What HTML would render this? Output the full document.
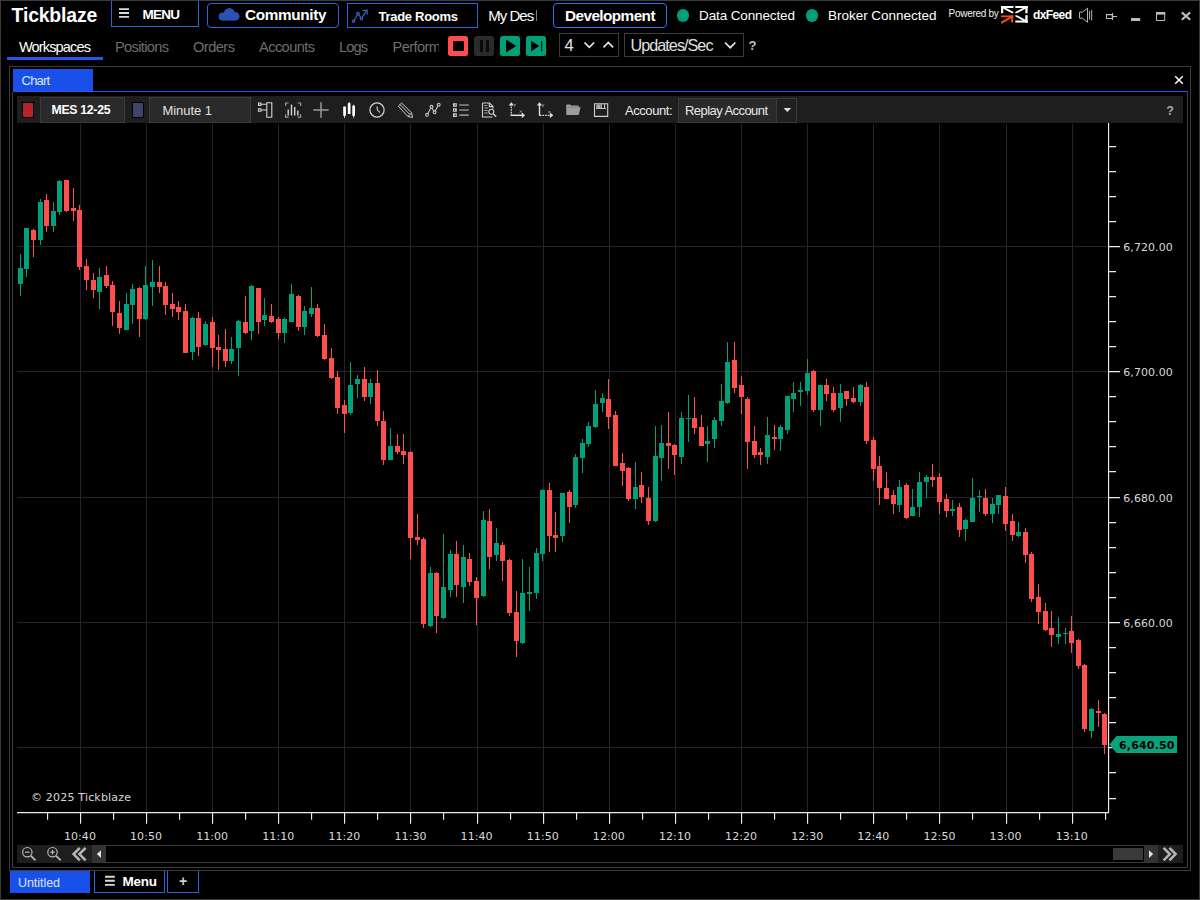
<!DOCTYPE html>
<html lang="en"><head><meta charset="utf-8"><title>Tickblaze</title>
<style>
html,body{margin:0;padding:0;background:#000;}
body{width:1200px;height:900px;overflow:hidden;position:relative;}
#win{position:absolute;left:0;top:0;width:1200px;height:900px;background:#000;overflow:hidden;}
#win>div,#win>svg{position:absolute;}
.b{box-sizing:border-box;}
.tx{white-space:pre;overflow:visible;}
.clipP{width:46px;overflow:hidden;}

</style></head>
<body>
<div id="win">
<!-- window border -->
<div class="b" style="left:0;top:0;width:1200px;height:900px;border:1px solid #3c3c3c;"></div>
<!-- title bar buttons -->
<div class="b" style="left:111px;top:1px;width:88px;height:26px;border:1px solid #2f63d8;border-top:none;"></div>
<svg style="left:118px;top:8px" width="13" height="12" viewBox="0 0 13 12"><path d="M1 1.1h10M1 5h10M1 8.9h10" stroke="#d8d8d8" stroke-width="1.9" fill="none"/></svg>
<div class="b" style="left:207px;top:3px;width:132px;height:25px;border:1px solid #2f63d8;border-radius:4px;"></div>
<svg style="left:216px;top:6px" width="26" height="17" viewBox="216 6 26 17"><g fill="#2c50b4"><circle cx="229.3" cy="13.4" r="5.5"/><circle cx="222.6" cy="16.6" r="4"/><circle cx="235.2" cy="16.3" r="4.3"/><rect x="222.6" y="15" width="12.6" height="5.6"/></g></svg>
<div class="b" style="left:347px;top:3px;width:130.5px;height:25px;border:1px solid #2f63d8;"></div>
<svg style="left:350px;top:6px" width="20" height="19" viewBox="350 6 20 19" fill="none" stroke="#3b61c8" stroke-width="1.2"><path d="M353.6 21.2l4.4-7.6 3.5 5 5-8"/><path d="M362.4 10.6l4.6-.6.3 4.6"/><g fill="#000"><circle cx="353.5" cy="21.3" r="1.2"/><circle cx="358" cy="13.6" r="1.2"/><circle cx="361.5" cy="18.6" r="1.2"/></g></svg>
<div class="b" style="left:553px;top:3px;width:114px;height:25px;border:1px solid #3a6cf0;border-radius:4px;"></div>
<div style="left:677px;top:9.4px;width:12.2px;height:12.2px;border-radius:50%;background:#00a078;"></div>
<div style="left:805.8px;top:9.4px;width:12.2px;height:12.2px;border-radius:50%;background:#00a078;"></div>
<div style="left:535.7px;top:9.8px;width:0.8px;height:10.8px;background:#808080;"></div>
<!-- dxFeed logo -->
<!-- window icons -->
<!-- tabs row -->
<div style="left:7px;top:57px;width:96px;height:2.5px;background:#2458f0;"></div>
<div style="left:448px;top:36px;width:20px;height:20.2px;border-radius:2.5px;background:#ff4d4f;"></div>
<div style="left:453px;top:41px;width:10.5px;height:10.2px;background:#000;"></div>
<div style="left:474px;top:36px;width:20px;height:20.2px;border-radius:2.5px;background:#2b2b2b;"></div>
<div style="left:480px;top:39.5px;width:3px;height:12.5px;background:#0a0a0a;"></div>
<div style="left:485.5px;top:39.5px;width:3px;height:12.5px;background:#0a0a0a;"></div>
<div style="left:500px;top:36px;width:20px;height:20.2px;border-radius:2.5px;background:#00a078;"></div>
<svg style="left:500px;top:36px" width="20" height="20" viewBox="0 0 20 20"><path d="M6 3.5v13l10.2-6.5z" fill="#000"/></svg>
<div style="left:526px;top:36px;width:20px;height:20.2px;border-radius:2.5px;background:#00a078;"></div>
<svg style="left:526px;top:36px" width="20" height="20" viewBox="0 0 20 20"><path d="M5 4.8v10.6l8.3-5.3z" fill="#000"/><path d="M15.6 5v10.2" stroke="#000" stroke-width="1.1"/></svg>
<div class="b" style="left:559px;top:33px;width:60px;height:24px;border:1px solid #3c3c3c;"></div>
<svg style="left:580px;top:38px" width="38" height="14" viewBox="0 0 38 14"><path d="M4.5 4.5l4.8 4.8 4.8-4.8M23.5 9.3l4.8-4.8 4.8 4.8" stroke="#e6e6e6" stroke-width="1.7" fill="none"/></svg>
<div class="b" style="left:624px;top:33px;width:120px;height:24px;border:1px solid #3c3c3c;"></div>
<svg style="left:720px;top:38px" width="20" height="14" viewBox="0 0 20 14"><path d="M5 4.5l5.2 5.2 5.2-5.2" stroke="#e6e6e6" stroke-width="1.7" fill="none"/></svg>
<!-- panel -->
<div class="b" style="left:9px;top:66px;width:1182px;height:805px;border:1px solid #3c3c3c;"></div>
<div class="b" style="left:12px;top:92px;width:1176px;height:776px;border:1px solid #3c3c3c;border-top:none;"></div>
<div style="left:13px;top:69px;width:80px;height:23px;background:#1a50ea;"></div>
<div style="left:13px;top:91px;width:1175px;height:1.4px;background:#2458f0;"></div>
<svg style="left:1174px;top:75px" width="10" height="10" viewBox="0 0 10 10"><path d="M1.2 1.2l7.6 7.6M8.8 1.2L1.2 8.8" stroke="#fff" stroke-width="1.5"/></svg>
<!-- toolbar -->
<div style="left:17px;top:96px;width:1166px;height:27px;background:#1e1e1e;"></div>
<div class="b" style="left:22px;top:101.6px;width:12px;height:16px;border:1px solid #000;background:#b8232a;"></div>
<div class="b" style="left:40px;top:97px;width:85px;height:25.5px;border:1px solid #3a3a3a;background:#2a2a2a;"></div>
<div class="b" style="left:132px;top:101.6px;width:11.8px;height:16px;border:1px solid #000;background:#3e4568;"></div>
<div class="b" style="left:149px;top:97px;width:102px;height:25.5px;border:1px solid #3a3a3a;background:#2a2a2a;"></div>
<div class="b" style="left:678px;top:97.5px;width:119px;height:25px;border:1px solid #3a3a3a;background:#2a2a2a;"></div>
<div style="left:777px;top:98.5px;width:19px;height:23px;background:#202020;"></div>
<div style="left:776px;top:98.5px;width:1px;height:23px;background:#3a3a3a;"></div>
<svg style="left:782px;top:106px" width="11" height="8" viewBox="0 0 11 8"><path d="M1.6 2h7.6L5.4 6z" fill="#e0e0e0"/></svg>
<!-- scrollbar row -->
<div style="left:17px;top:845px;width:75px;height:18px;background:#1e1e1e;"></div>
<div style="left:92px;top:845px;width:14px;height:18px;background:#333;"></div>
<div class="b" style="left:106px;top:845px;width:1038px;height:18px;border-top:1px solid #3a3a3a;border-bottom:1px solid #3a3a3a;"></div>
<div style="left:1113px;top:848px;width:30px;height:12px;background:#3a3a3a;"></div>
<div style="left:1144px;top:845px;width:14px;height:18px;background:#333;"></div>
<div style="left:1158px;top:845px;width:25px;height:18px;background:#1e1e1e;"></div>
<!-- bottom tabs -->
<div style="left:10px;top:871px;width:80px;height:22px;background:#1a50ea;"></div>
<div class="b" style="left:94px;top:871px;width:71px;height:22px;border:1px solid #2f63d8;border-top:none;"></div>
<svg style="left:104px;top:875px" width="12" height="13" viewBox="0 0 12 13"><path d="M1 1.7h9.8M1 5.8h9.8M1 9.9h9.8" stroke="#d8d8d8" stroke-width="1.9" fill="none"/></svg>
<div class="b" style="left:167px;top:871px;width:32px;height:22px;border:1px solid #2f63d8;border-top:none;"></div>

<svg style="left:0;top:0" width="1200" height="900" viewBox="0 0 1200 900" shape-rendering="crispEdges">
<path d="M80.5 124V812M146.5 124V812M212.5 124V812M278.5 124V812M344.5 124V812M410.5 124V812M477.5 124V812M543.5 124V812M609.5 124V812M675.5 124V812M741.5 124V812M807.5 124V812M873.5 124V812M939.5 124V812M1006.5 124V812M1072.5 124V812M17 246.5H1108M17 371.5H1108M17 497.5H1108M17 622.5H1108M17 747.5H1108" stroke="#24242d" stroke-width="1" fill="none"/>
<path d="M20 254h1V296h-1zM18 268h5V284h-5zM26 228h1V277h-1zM24 228h5V269h-5zM40 199h1V245h-1zM38 202h5V240h-5zM53 202h1V232h-1zM51 211h5V226h-5zM59 180h1V215h-1zM57 181h5V212h-5zM99 268h1V309h-1zM97 277h5V292h-5zM126 293h1V330h-1zM124 304h5V330h-5zM132 284h1V324h-1zM130 289h5V305h-5zM145 266h1V320h-1zM143 285h5V319h-5zM152 260h1V306h-1zM150 282h5V287h-5zM192 317h1V360h-1zM190 318h5V352h-5zM205 321h1V346h-1zM203 324h5V345h-5zM231 337h1V364h-1zM229 349h5V361h-5zM238 320h1V376h-1zM236 321h5V348h-5zM251 285h1V340h-1zM249 286h5V331h-5zM264 298h1V326h-1zM262 315h5V320h-5zM284 318h1V343h-1zM282 319h5V333h-5zM291 284h1V322h-1zM289 294h5V322h-5zM304 306h1V335h-1zM302 311h5V327h-5zM311 287h1V317h-1zM309 308h5V314h-5zM350 362h1V415h-1zM348 385h5V413h-5zM357 375h1V398h-1zM355 379h5V384h-5zM370 379h1V404h-1zM368 383h5V397h-5zM390 428h1V460h-1zM388 446h5V460h-5zM430 567h1V627h-1zM428 573h5V626h-5zM443 534h1V619h-1zM441 587h5V618h-5zM450 550h1V597h-1zM448 554h5V590h-5zM463 545h1V603h-1zM461 557h5V587h-5zM483 511h1V597h-1zM481 520h5V596h-5zM496 528h1V561h-1zM494 543h5V555h-5zM522 559h1V644h-1zM520 593h5V643h-5zM529 567h1V611h-1zM527 592h5V594h-5zM536 548h1V599h-1zM534 553h5V593h-5zM542 489h1V561h-1zM540 490h5V554h-5zM562 493h1V542h-1zM560 493h5V536h-5zM575 454h1V508h-1zM573 457h5V505h-5zM582 439h1V473h-1zM580 443h5V458h-5zM588 422h1V447h-1zM586 426h5V444h-5zM595 390h1V428h-1zM593 404h5V427h-5zM602 393h1V412h-1zM600 398h5V403h-5zM635 462h1V509h-1zM633 487h5V499h-5zM655 426h1V522h-1zM653 456h5V521h-5zM661 425h1V481h-1zM659 443h5V458h-5zM681 412h1V464h-1zM679 418h5V457h-5zM688 395h1V442h-1zM686 418h5V419h-5zM707 426h1V462h-1zM705 441h5V444h-5zM714 417h1V448h-1zM712 420h5V439h-5zM721 384h1V426h-1zM719 401h5V421h-5zM727 342h1V404h-1zM725 362h5V403h-5zM767 417h1V464h-1zM765 435h5V457h-5zM780 425h1V451h-1zM778 427h5V439h-5zM787 396h1V434h-1zM785 396h5V430h-5zM793 382h1V412h-1zM791 393h5V399h-5zM800 382h1V406h-1zM798 390h5V392h-5zM807 359h1V395h-1zM805 373h5V391h-5zM820 385h1V426h-1zM818 385h5V410h-5zM840 384h1V422h-1zM838 393h5V408h-5zM860 384h1V406h-1zM858 385h5V402h-5zM899 480h1V512h-1zM897 487h5V505h-5zM912 489h1V516h-1zM910 507h5V516h-5zM919 472h1V517h-1zM917 482h5V507h-5zM926 475h1V498h-1zM924 477h5V482h-5zM952 500h1V516h-1zM950 509h5V511h-5zM965 519h1V541h-1zM963 520h5V529h-5zM972 478h1V522h-1zM970 498h5V522h-5zM979 490h1V512h-1zM977 496h5V497h-5zM992 498h1V523h-1zM990 504h5V514h-5zM998 495h1V514h-1zM996 495h5V505h-5zM1018 522h1V537h-1zM1016 532h5V536h-5zM1058 617h1V644h-1zM1056 634h5V637h-5zM1065 628h1V644h-1zM1063 633h5V634h-5zM1091 708h1V738h-1zM1089 709h5V731h-5z" fill="#00a07a"/>
<path d="M33 229h1V257h-1zM31 230h5V240h-5zM46 194h1V232h-1zM44 200h5V226h-5zM66 180h1V212h-1zM64 180h5V211h-5zM73 188h1V221h-1zM71 208h5V211h-5zM79 205h1V270h-1zM77 210h5V267h-5zM86 259h1V290h-1zM84 266h5V280h-5zM93 273h1V298h-1zM91 280h5V290h-5zM106 266h1V288h-1zM104 275h5V286h-5zM112 281h1V326h-1zM110 285h5V312h-5zM119 301h1V334h-1zM117 313h5V328h-5zM139 287h1V337h-1zM137 288h5V319h-5zM159 266h1V293h-1zM157 282h5V287h-5zM165 282h1V315h-1zM163 286h5V305h-5zM172 293h1V317h-1zM170 304h5V309h-5zM178 301h1V320h-1zM176 307h5V312h-5zM185 304h1V353h-1zM183 311h5V353h-5zM198 312h1V356h-1zM196 318h5V347h-5zM212 317h1V367h-1zM210 322h5V348h-5zM218 335h1V370h-1zM216 347h5V350h-5zM225 329h1V367h-1zM223 349h5V361h-5zM245 296h1V334h-1zM243 322h5V333h-5zM258 288h1V334h-1zM256 288h5V322h-5zM271 304h1V323h-1zM269 316h5V322h-5zM278 317h1V339h-1zM276 319h5V333h-5zM298 295h1V331h-1zM296 296h5V327h-5zM317 304h1V337h-1zM315 308h5V336h-5zM324 324h1V360h-1zM322 335h5V359h-5zM331 348h1V379h-1zM329 358h5V378h-5zM337 371h1V414h-1zM335 377h5V408h-5zM344 400h1V433h-1zM342 405h5V414h-5zM364 367h1V401h-1zM362 379h5V397h-5zM377 370h1V426h-1zM375 383h5V421h-5zM383 411h1V465h-1zM381 421h5V460h-5zM397 434h1V454h-1zM395 446h5V452h-5zM403 434h1V464h-1zM401 451h5V455h-5zM410 451h1V559h-1zM408 452h5V538h-5zM417 514h1V545h-1zM415 537h5V540h-5zM423 537h1V628h-1zM421 539h5V624h-5zM436 572h1V633h-1zM434 573h5V616h-5zM456 541h1V597h-1zM454 554h5V585h-5zM469 553h1V586h-1zM467 559h5V582h-5zM476 577h1V625h-1zM474 581h5V598h-5zM489 509h1V569h-1zM487 521h5V557h-5zM502 542h1V581h-1zM500 545h5V561h-5zM509 559h1V616h-1zM507 560h5V613h-5zM516 591h1V657h-1zM514 612h5V641h-5zM549 483h1V552h-1zM547 490h5V536h-5zM555 512h1V552h-1zM553 535h5V538h-5zM569 490h1V523h-1zM567 492h5V507h-5zM608 379h1V429h-1zM606 399h5V417h-5zM615 411h1V466h-1zM613 415h5V466h-5zM622 453h1V486h-1zM620 463h5V471h-5zM628 467h1V501h-1zM626 468h5V499h-5zM641 472h1V503h-1zM639 485h5V497h-5zM648 487h1V525h-1zM646 498h5V521h-5zM668 412h1V469h-1zM666 443h5V446h-5zM674 444h1V475h-1zM672 445h5V455h-5zM694 397h1V434h-1zM692 418h5V428h-5zM701 415h1V446h-1zM699 427h5V446h-5zM734 342h1V393h-1zM732 360h5V388h-5zM741 376h1V414h-1zM739 385h5V397h-5zM747 397h1V469h-1zM745 399h5V442h-5zM754 426h1V458h-1zM752 441h5V455h-5zM760 448h1V465h-1zM758 452h5V455h-5zM774 425h1V450h-1zM772 437h5V439h-5zM813 370h1V412h-1zM811 371h5V410h-5zM826 379h1V401h-1zM824 385h5V394h-5zM833 387h1V412h-1zM831 393h5V410h-5zM846 391h1V406h-1zM844 391h5V399h-5zM853 387h1V403h-1zM851 398h5V402h-5zM866 382h1V444h-1zM864 387h5V441h-5zM873 437h1V481h-1zM871 440h5V469h-5zM879 456h1V505h-1zM877 466h5V488h-5zM886 472h1V499h-1zM884 488h5V499h-5zM893 490h1V514h-1zM891 495h5V504h-5zM906 483h1V519h-1zM904 485h5V518h-5zM932 464h1V487h-1zM930 477h5V480h-5zM939 473h1V514h-1zM937 477h5V502h-5zM946 494h1V517h-1zM944 499h5V511h-5zM959 503h1V537h-1zM957 507h5V530h-5zM985 489h1V516h-1zM983 498h5V514h-5zM1005 487h1V531h-1zM1003 496h5V524h-5zM1012 514h1V541h-1zM1010 521h5V535h-5zM1025 528h1V563h-1zM1023 532h5V555h-5zM1031 552h1V602h-1zM1029 554h5V599h-5zM1038 584h1V624h-1zM1036 597h5V612h-5zM1045 603h1V631h-1zM1043 611h5V630h-5zM1051 611h1V647h-1zM1049 628h5V635h-5zM1071 616h1V653h-1zM1069 631h5V643h-5zM1078 639h1V669h-1zM1076 640h5V666h-5zM1084 664h1V732h-1zM1082 665h5V729h-5zM1098 700h1V727h-1zM1096 711h5V713h-5zM1104 713h1V754h-1zM1102 714h5V745h-5z" fill="#ff4e4e"/>
<path d="M1108 123h1.15V813.15h-1.15zM17 812H1109v1.15H17z" fill="#ececec" shape-rendering="auto"/>
<path d="M1109 146H1116v1.15H1109zM1109 171H1116v1.15H1109zM1109 196H1116v1.15H1109zM1109 221H1116v1.15H1109zM1109 246H1120v1.15H1109zM1109 271H1116v1.15H1109zM1109 296H1116v1.15H1109zM1109 321H1116v1.15H1109zM1109 346H1116v1.15H1109zM1109 371H1120v1.15H1109zM1109 396H1116v1.15H1109zM1109 421H1116v1.15H1109zM1109 446H1116v1.15H1109zM1109 471H1116v1.15H1109zM1109 497H1120v1.15H1109zM1109 522H1116v1.15H1109zM1109 547H1116v1.15H1109zM1109 572H1116v1.15H1109zM1109 597H1116v1.15H1109zM1109 622H1120v1.15H1109zM1109 647H1116v1.15H1109zM1109 672H1116v1.15H1109zM1109 697H1116v1.15H1109zM1109 722H1116v1.15H1109zM1109 747H1120v1.15H1109zM1109 772H1116v1.15H1109zM1109 798H1116v1.15H1109zM80 813v10.8h1.15V813zM146 813v10.8h1.15V813zM212 813v10.8h1.15V813zM278 813v10.8h1.15V813zM344 813v10.8h1.15V813zM410 813v10.8h1.15V813zM477 813v10.8h1.15V813zM543 813v10.8h1.15V813zM609 813v10.8h1.15V813zM675 813v10.8h1.15V813zM741 813v10.8h1.15V813zM807 813v10.8h1.15V813zM873 813v10.8h1.15V813zM939 813v10.8h1.15V813zM1006 813v10.8h1.15V813zM1072 813v10.8h1.15V813zM47 813v6.8h1.15V813zM113 813v6.8h1.15V813zM179 813v6.8h1.15V813zM245 813v6.8h1.15V813zM311 813v6.8h1.15V813zM377 813v6.8h1.15V813zM443 813v6.8h1.15V813zM510 813v6.8h1.15V813zM576 813v6.8h1.15V813zM642 813v6.8h1.15V813zM708 813v6.8h1.15V813zM774 813v6.8h1.15V813zM840 813v6.8h1.15V813zM906 813v6.8h1.15V813zM972 813v6.8h1.15V813zM1039 813v6.8h1.15V813zM1105 813v6.8h1.15V813z" fill="#ececec" shape-rendering="auto"/>
<path d="M1109.5 744.5L1116.5 736H1177V753H1116.5z" fill="#0aa27c" shape-rendering="auto"/>
</svg>
<svg style="left:0;top:0" width="1200" height="900" viewBox="0 0 1200 900" fill="none">
<!-- dxFeed logo -->
<defs>
<clipPath id="q1"><rect x="1001" y="5.9" width="12.4" height="7.4"/></clipPath>
<clipPath id="q2"><rect x="1015.3" y="5.9" width="12.5" height="7.4"/></clipPath>
<clipPath id="q3"><path d="M1001 15.2h12.4v7.5h-2.2v1h-10.2z"/></clipPath>
<clipPath id="q4"><rect x="1015.3" y="15.2" width="12.5" height="7.5"/></clipPath>
</defs>
<g stroke="#fff" clip-path="url(#q1)"><path d="M1001 6.95H1014" stroke-width="2.1"/><path d="M1002.1 5.9V14" stroke-width="2.2"/><path d="M1002 6.9L1014.4 13.6" stroke-width="1.9"/></g>
<g stroke="#fff" clip-path="url(#q2)"><path d="M1015 6.95H1028" stroke-width="2.1"/><path d="M1026.55 5.9V14" stroke-width="2.5"/><path d="M1026.8 6.9L1014.4 13.6" stroke-width="1.9"/></g>
<g stroke="#fff" clip-path="url(#q4)"><path d="M1015 21.65H1028" stroke-width="2.1"/><path d="M1026.55 15V23" stroke-width="2.5"/><path d="M1014.4 14.9L1026.8 21.7" stroke-width="1.9"/></g>
<g stroke="#f04a20" clip-path="url(#q3)"><path d="M1001 16.25H1014" stroke-width="2.1"/><path d="M1012.3 15V22.7" stroke-width="2.2"/><path d="M1000 23.6L1012.4 16.3" stroke-width="2"/></g>
<!-- speaker -->
<path d="M1079.5 12.2h2.8l5.2-4v14l-5.2-4h-2.8z" stroke="#b4b4b4" stroke-width="1"/>
<path d="M1089.6 11v8.6M1091.7 10v10.6" stroke="#b4b4b4" stroke-width="1"/>
<!-- pin -->
<path d="M1106.5 14.6h5.8v3.9h-5.8z" stroke="#bdbdbd" stroke-width="1.1"/>
<path d="M1112.6 13v7M1112.6 16.5h4.4" stroke="#bdbdbd" stroke-width="1.1"/>
<!-- minimize -->
<path d="M1131 18h9.2v3h-9.2z" fill="#bdbdbd"/>
<!-- maximize -->
<path d="M1156.5 12.5h8.2v8h-8.2z" stroke="#bdbdbd" stroke-width="1"/>
<path d="M1156 12h9.2v2.6h-9.2z" fill="#bdbdbd"/>
<!-- close -->
<path d="M1181.8 12.4l8.4 7.4M1190.2 12.4l-8.4 7.4" stroke="#bdbdbd" stroke-width="2.1"/>
<!-- toolbar icons -->
<g stroke="#d6d6d6" stroke-width="1.1">
<path d="M266.8 102.8h5v14.5h-5z"/>
<path d="M258.5 103h2.4v2.4h-2.4zM258.5 108.8h2.4v2.4h-2.4zM261 104.2h5.5M261 110h5.5"/>
</g>
<g stroke="#9a9a9a" stroke-width="1.2">
<path d="M285.6 106v-3h3M297.6 103h3v3M300.6 114.2v3h-3M288.6 117.2h-3v-3"/>
<path d="M313.3 110h15.4M321 102.3v15.4" stroke-width="1.5"/>
</g>
<path d="M288.2 109.5v6M291.5 104.5v11M294.7 107v8.5M297.8 110.5v5" stroke="#d0d0d0" stroke-width="1.4"/>
<g fill="#fff">
<path d="M343.2 106.5h2.7v9.2h-.9v2h-.9v-2h-.9z"/>
<path d="M347.8 103.3h.9v-1.3h.9v1.3h.9v10.7h-2.7z"/>
<path d="M352.3 105.7h.9v-1h.9v1h.9v10h-.9v2h-.9v-2h-.9z"/>
</g>
<circle cx="377" cy="110" r="7.1" stroke="#d6d6d6" stroke-width="1.2"/>
<path d="M377.2 106.6v2.4c.3 1.6 1.3 2.6 2.8 3.4" stroke="#bdbdbd" stroke-width="1.3"/>
<g stroke="#d0d0d0" stroke-width="1">
<path d="M398.3 106.2l3.3-3.2 10 9.8.9 4.6-4.6-.9z"/>
<path d="M400 104.6l9.7 9.7M408 116.4l3.5-3.5M401.5 103.2"/>
</g>
<g stroke="#c8c8c8" stroke-width="1.1">
<path d="M427.3 114.5l4-7.5 3.2 5.2 4-7.3"/>
<circle cx="427" cy="114.8" r="1.4" fill="#1e1e1e"/><circle cx="431.5" cy="106.8" r="1.4" fill="#1e1e1e"/><circle cx="434.6" cy="112.3" r="1.4" fill="#1e1e1e"/><circle cx="438.7" cy="104.7" r="1.4" fill="#1e1e1e"/>
</g>
<g fill="#cfcfcf"><path d="M453 103.2h3.8v3.6H453zM453 108.2h3.8v3.6H453zM453 113.3h3.8v3.6H453z"/></g>
<g fill="#1e1e1e"><path d="M454.6 104.4h1.4v1.2h-1.4zM454.2 109.2h.9v1.6h-.9zM454.6 114.5h1.4v1.2h-1.4z"/></g>
<path d="M459.2 105h9.6M459.2 110h9.6M459.2 115.1h9.6" stroke="#8c8c8c" stroke-width="1.7"/>
<g stroke="#cfcfcf" stroke-width="1.1">
<path d="M482.5 103h7l3.5 3.4v2M482.5 103v14h10M489.3 103v3.6h3.6"/>
<path d="M484.3 105.5h3M484.3 108h4M484.3 110.5h3.4M484.3 113h3.4" stroke="#aaa"/>
<circle cx="491.3" cy="111.8" r="2.5"/>
<path d="M493.2 113.8l3 3" stroke-width="1.4"/>
</g>
<g stroke="#e0e0e0">
<path d="M511.3 104v11.3" stroke-width="1.2" stroke-dasharray="1.6 1"/>
<path d="M510.6 115.3h12" stroke-width="1.5"/>
<path d="M509.3 105.2l2-2.6 2 2.6zM522 113l2.8 2.3-2.8 2.3z" fill="#e0e0e0" stroke-width=".6"/>
<path d="M513.6 103.8l1.1 1.5 1.1-1.5M514.7 105.3v1.4M519.8 110.6l1.8 2M521.6 110.6l-1.8 2" stroke="#aaa" stroke-width=".8"/>
<path d="M539.5 104v11.8" stroke-width="1.4"/>
<path d="M540 115.3h11" stroke-width="1.2" stroke-dasharray="1.6 1"/>
<path d="M537.5 105.2l2-2.6 2 2.6zM550.2 113l2.8 2.3-2.8 2.3z" fill="#e0e0e0" stroke-width=".6"/>
<path d="M541.8 104.3l1.1 1.5 1.1-1.5M542.9 105.8v1.4M548.6 111.1l1.5 1.7M550.1 111.1l-1.5 1.7" stroke="#aaa" stroke-width=".8"/>
</g>
<path d="M566.2 105.2q0-.8.8-.8h3.2l1 1.1h6.8q.8 0 .8.8v.6h1.2q.7 0 .5.7l-1.7 6.9q-.2.6-.9.6h-11q-.7 0-.7-.7z" fill="#9c9c9c"/>
<path d="M567.6 107.2h11.5" stroke="#6c6c6c" stroke-width=".6"/>
<path d="M594.5 103.8h13.2v12.6h-13.2z" stroke="#cfcfcf" stroke-width="1.1"/>
<path d="M596.3 104.3h4.3v3.7h-4.3z" fill="#a8a8a8"/>
<path d="M601.3 104v4.3M596 108.4h10" stroke="#cfcfcf" stroke-width="1"/>
<path d="M604.6 104v4.3" stroke="#cfcfcf" stroke-width="1"/>
<!-- scrollbar icons -->
<g stroke="#b8b8b8" stroke-width="1.2">
<circle cx="27.3" cy="852.2" r="4.7"/><path d="M25 852.2h4.6"/>
<path d="M30.9 855.8l4.6 4.6" stroke-width="1.8"/>
<circle cx="52.5" cy="852.2" r="4.7"/><path d="M50.2 852.2h4.6M52.5 849.9v4.6"/>
<path d="M56.1 855.8l4.6 4.6" stroke-width="1.8"/>
</g>
<path d="M79.8 847.8l-6.2 6.3 6.2 6.3M85.6 847.8l-6.2 6.3 6.2 6.3" stroke="#b4b4b4" stroke-width="2.6"/>
<path d="M1163.6 847.8l6.2 6.3-6.2 6.3M1169.4 847.8l6.2 6.3-6.2 6.3" stroke="#b4b4b4" stroke-width="2.6"/>
<path d="M96.8 854.1l4.2-3.8v7.6z" fill="#e0e0e0"/>
<path d="M1153.2 854.1l-4.2-3.8v7.6z" fill="#e0e0e0"/>
</svg>

<div class="tx " style="left:11.6px;top:5.99px;height:19.4px;line-height:19.4px;font-family:'Liberation Sans', sans-serif;font-size:19.4px;font-weight:700;color:#fff;letter-spacing:-0.169px">Tickblaze</div>
<div class="tx " style="left:142.5px;top:7.58px;height:13.5px;line-height:13.5px;font-family:'Liberation Sans', sans-serif;font-size:13.5px;font-weight:700;color:#fff;letter-spacing:-0.750px">MENU</div>
<div class="tx " style="left:245px;top:7.06px;height:15.3px;line-height:15.3px;font-family:'Liberation Sans', sans-serif;font-size:15.3px;font-weight:700;color:#fff;letter-spacing:-0.330px">Community</div>
<div class="tx " style="left:378.5px;top:9.50px;height:13px;line-height:13px;font-family:'Liberation Sans', sans-serif;font-size:13px;font-weight:700;color:#fff;letter-spacing:-0.286px">Trade Rooms</div>
<div class="tx " style="left:488.2px;top:7.81px;height:15px;line-height:15px;font-family:'Liberation Sans', sans-serif;font-size:15px;font-weight:400;color:#fff;letter-spacing:-0.969px">My Des</div>
<div class="tx " style="left:565px;top:7.56px;height:15.3px;line-height:15.3px;font-family:'Liberation Sans', sans-serif;font-size:15.3px;font-weight:700;color:#fff;letter-spacing:-0.556px">Development</div>
<div class="tx " style="left:699px;top:8.58px;height:13.5px;line-height:13.5px;font-family:'Liberation Sans', sans-serif;font-size:13.5px;font-weight:400;color:#fff;letter-spacing:-0.121px">Data Connected</div>
<div class="tx " style="left:828px;top:8.58px;height:13.5px;line-height:13.5px;font-family:'Liberation Sans', sans-serif;font-size:13.5px;font-weight:400;color:#fff;letter-spacing:-0.021px">Broker Connected</div>
<div class="tx " style="left:948.6px;top:9.14px;height:10px;line-height:10px;font-family:'Liberation Sans', sans-serif;font-size:10px;font-weight:400;color:#f0f0f0;letter-spacing:-0.290px">Powered by</div>
<div class="tx " style="left:1033px;top:8.85px;height:12px;line-height:12px;font-family:'Liberation Sans', sans-serif;font-size:12px;font-weight:700;color:#fff;letter-spacing:-0.603px">dxFeed</div>
<div class="tx " style="left:19px;top:39.65px;height:14.6px;line-height:14.6px;font-family:'Liberation Sans', sans-serif;font-size:14.6px;font-weight:400;color:#fff;letter-spacing:-0.892px">Workspaces</div>
<div class="tx " style="left:115px;top:39.65px;height:14.6px;line-height:14.6px;font-family:'Liberation Sans', sans-serif;font-size:14.6px;font-weight:400;color:#6e6e6e;letter-spacing:-0.652px">Positions</div>
<div class="tx " style="left:193px;top:39.65px;height:14.6px;line-height:14.6px;font-family:'Liberation Sans', sans-serif;font-size:14.6px;font-weight:400;color:#6e6e6e;letter-spacing:-0.522px">Orders</div>
<div class="tx " style="left:259px;top:39.65px;height:14.6px;line-height:14.6px;font-family:'Liberation Sans', sans-serif;font-size:14.6px;font-weight:400;color:#6e6e6e;letter-spacing:-0.576px">Accounts</div>
<div class="tx " style="left:339px;top:39.65px;height:14.6px;line-height:14.6px;font-family:'Liberation Sans', sans-serif;font-size:14.6px;font-weight:400;color:#6e6e6e;letter-spacing:-0.885px">Logs</div>
<div class="tx clipP" style="left:392.5px;top:39.65px;height:14.6px;line-height:14.6px;font-family:'Liberation Sans', sans-serif;font-size:14.6px;font-weight:400;color:#6e6e6e;letter-spacing:-0.568px">Perform</div>
<div class="tx " style="left:564.6px;top:37.14px;height:16.5px;line-height:16.5px;font-family:'Liberation Sans', sans-serif;font-size:16.5px;font-weight:400;color:#e6e6e6;letter-spacing:-0.388px">4</div>
<div class="tx " style="left:630.5px;top:37.49px;height:16.2px;line-height:16.2px;font-family:'Liberation Sans', sans-serif;font-size:16.2px;font-weight:400;color:#e0e0e0;letter-spacing:-0.969px">Updates/Sec</div>
<div class="tx " style="left:748.6px;top:39.00px;height:13px;line-height:13px;font-family:'Liberation Sans', sans-serif;font-size:13px;font-weight:700;color:#c0c0c0;letter-spacing:-1.553px">?</div>
<div class="tx " style="left:21.6px;top:74.00px;height:13px;line-height:13px;font-family:'Liberation Sans', sans-serif;font-size:13px;font-weight:400;color:#dbe6ff;letter-spacing:-0.849px">Chart</div>
<div class="tx " style="left:51.5px;top:103.79px;height:12.3px;line-height:12.3px;font-family:'Liberation Sans', sans-serif;font-size:12.3px;font-weight:700;color:#fff;letter-spacing:-0.314px">MES 12-25</div>
<div class="tx " style="left:162.5px;top:104.00px;height:13px;line-height:13px;font-family:'Liberation Sans', sans-serif;font-size:13px;font-weight:400;color:#e0e0e0;letter-spacing:-0.054px">Minute 1</div>
<div class="tx " style="left:625px;top:104.00px;height:13px;line-height:13px;font-family:'Liberation Sans', sans-serif;font-size:13px;font-weight:400;color:#e8e8e8;letter-spacing:-0.442px">Account:</div>
<div class="tx " style="left:685px;top:104.00px;height:13px;line-height:13px;font-family:'Liberation Sans', sans-serif;font-size:13px;font-weight:400;color:#e8e8e8;letter-spacing:-0.565px">Replay Account</div>
<div class="tx " style="left:1166.2px;top:104.92px;height:12.5px;line-height:12.5px;font-family:'Liberation Sans', sans-serif;font-size:12.5px;font-weight:700;color:#a8a8a8;letter-spacing:-1.241px">?</div>
<div class="tx " style="left:1123.3px;top:241.99px;height:11px;line-height:11px;font-family:'DejaVu Sans', 'Liberation Sans', sans-serif;font-size:11px;font-weight:400;color:#d8d8dc;letter-spacing:0.059px">6,720.00</div>
<div class="tx " style="left:1123.3px;top:366.99px;height:11px;line-height:11px;font-family:'DejaVu Sans', 'Liberation Sans', sans-serif;font-size:11px;font-weight:400;color:#d8d8dc;letter-spacing:0.059px">6,700.00</div>
<div class="tx " style="left:1123.3px;top:492.99px;height:11px;line-height:11px;font-family:'DejaVu Sans', 'Liberation Sans', sans-serif;font-size:11px;font-weight:400;color:#d8d8dc;letter-spacing:0.059px">6,680.00</div>
<div class="tx " style="left:1123.3px;top:617.99px;height:11px;line-height:11px;font-family:'DejaVu Sans', 'Liberation Sans', sans-serif;font-size:11px;font-weight:400;color:#d8d8dc;letter-spacing:0.059px">6,660.00</div>
<div class="tx " style="left:1119px;top:739.99px;height:11px;line-height:11px;font-family:'DejaVu Sans', 'Liberation Sans', sans-serif;font-size:11px;font-weight:700;color:#000;letter-spacing:0.174px">6,640.50</div>
<div class="tx " style="left:63.900000000000006px;top:830.69px;height:11px;line-height:11px;font-family:'DejaVu Sans', 'Liberation Sans', sans-serif;font-size:11px;font-weight:400;color:#d8d8dc;letter-spacing:0.074px">10:40</div>
<div class="tx " style="left:130.02px;top:830.69px;height:11px;line-height:11px;font-family:'DejaVu Sans', 'Liberation Sans', sans-serif;font-size:11px;font-weight:400;color:#d8d8dc;letter-spacing:0.074px">10:50</div>
<div class="tx " style="left:196.14000000000001px;top:830.69px;height:11px;line-height:11px;font-family:'DejaVu Sans', 'Liberation Sans', sans-serif;font-size:11px;font-weight:400;color:#d8d8dc;letter-spacing:0.074px">11:00</div>
<div class="tx " style="left:262.26px;top:830.69px;height:11px;line-height:11px;font-family:'DejaVu Sans', 'Liberation Sans', sans-serif;font-size:11px;font-weight:400;color:#d8d8dc;letter-spacing:0.074px">11:10</div>
<div class="tx " style="left:328.38px;top:830.69px;height:11px;line-height:11px;font-family:'DejaVu Sans', 'Liberation Sans', sans-serif;font-size:11px;font-weight:400;color:#d8d8dc;letter-spacing:0.074px">11:20</div>
<div class="tx " style="left:394.5px;top:830.69px;height:11px;line-height:11px;font-family:'DejaVu Sans', 'Liberation Sans', sans-serif;font-size:11px;font-weight:400;color:#d8d8dc;letter-spacing:0.074px">11:30</div>
<div class="tx " style="left:460.62px;top:830.69px;height:11px;line-height:11px;font-family:'DejaVu Sans', 'Liberation Sans', sans-serif;font-size:11px;font-weight:400;color:#d8d8dc;letter-spacing:0.074px">11:40</div>
<div class="tx " style="left:526.74px;top:830.69px;height:11px;line-height:11px;font-family:'DejaVu Sans', 'Liberation Sans', sans-serif;font-size:11px;font-weight:400;color:#d8d8dc;letter-spacing:0.074px">11:50</div>
<div class="tx " style="left:592.86px;top:830.69px;height:11px;line-height:11px;font-family:'DejaVu Sans', 'Liberation Sans', sans-serif;font-size:11px;font-weight:400;color:#d8d8dc;letter-spacing:0.074px">12:00</div>
<div class="tx " style="left:658.98px;top:830.69px;height:11px;line-height:11px;font-family:'DejaVu Sans', 'Liberation Sans', sans-serif;font-size:11px;font-weight:400;color:#d8d8dc;letter-spacing:0.074px">12:10</div>
<div class="tx " style="left:725.1px;top:830.69px;height:11px;line-height:11px;font-family:'DejaVu Sans', 'Liberation Sans', sans-serif;font-size:11px;font-weight:400;color:#d8d8dc;letter-spacing:0.074px">12:20</div>
<div class="tx " style="left:791.22px;top:830.69px;height:11px;line-height:11px;font-family:'DejaVu Sans', 'Liberation Sans', sans-serif;font-size:11px;font-weight:400;color:#d8d8dc;letter-spacing:0.074px">12:30</div>
<div class="tx " style="left:857.34px;top:830.69px;height:11px;line-height:11px;font-family:'DejaVu Sans', 'Liberation Sans', sans-serif;font-size:11px;font-weight:400;color:#d8d8dc;letter-spacing:0.074px">12:40</div>
<div class="tx " style="left:923.46px;top:830.69px;height:11px;line-height:11px;font-family:'DejaVu Sans', 'Liberation Sans', sans-serif;font-size:11px;font-weight:400;color:#d8d8dc;letter-spacing:0.074px">12:50</div>
<div class="tx " style="left:989.58px;top:830.69px;height:11px;line-height:11px;font-family:'DejaVu Sans', 'Liberation Sans', sans-serif;font-size:11px;font-weight:400;color:#d8d8dc;letter-spacing:0.074px">13:00</div>
<div class="tx " style="left:1055.7px;top:830.69px;height:11px;line-height:11px;font-family:'DejaVu Sans', 'Liberation Sans', sans-serif;font-size:11px;font-weight:400;color:#d8d8dc;letter-spacing:0.074px">13:10</div>
<div class="tx " style="left:31px;top:791.99px;height:11px;line-height:11px;font-family:'DejaVu Sans', 'Liberation Sans', sans-serif;font-size:11px;font-weight:400;color:#d8d8d8;letter-spacing:0.189px">© 2025 Tickblaze</div>
<div class="tx " style="left:18px;top:877.12px;height:12.5px;line-height:12.5px;font-family:'Liberation Sans', sans-serif;font-size:12.5px;font-weight:400;color:#dbe6ff;letter-spacing:-0.056px">Untitled</div>
<div class="tx " style="left:122.5px;top:875.28px;height:13.5px;line-height:13.5px;font-family:'Liberation Sans', sans-serif;font-size:13.5px;font-weight:700;color:#fff;letter-spacing:-0.250px">Menu</div>
<div class="tx " style="left:179px;top:874.16px;height:14px;line-height:14px;font-family:'Liberation Sans', sans-serif;font-size:14px;font-weight:700;color:#d0d0d0;letter-spacing:0.812px">+</div>

</div>
</body></html>
